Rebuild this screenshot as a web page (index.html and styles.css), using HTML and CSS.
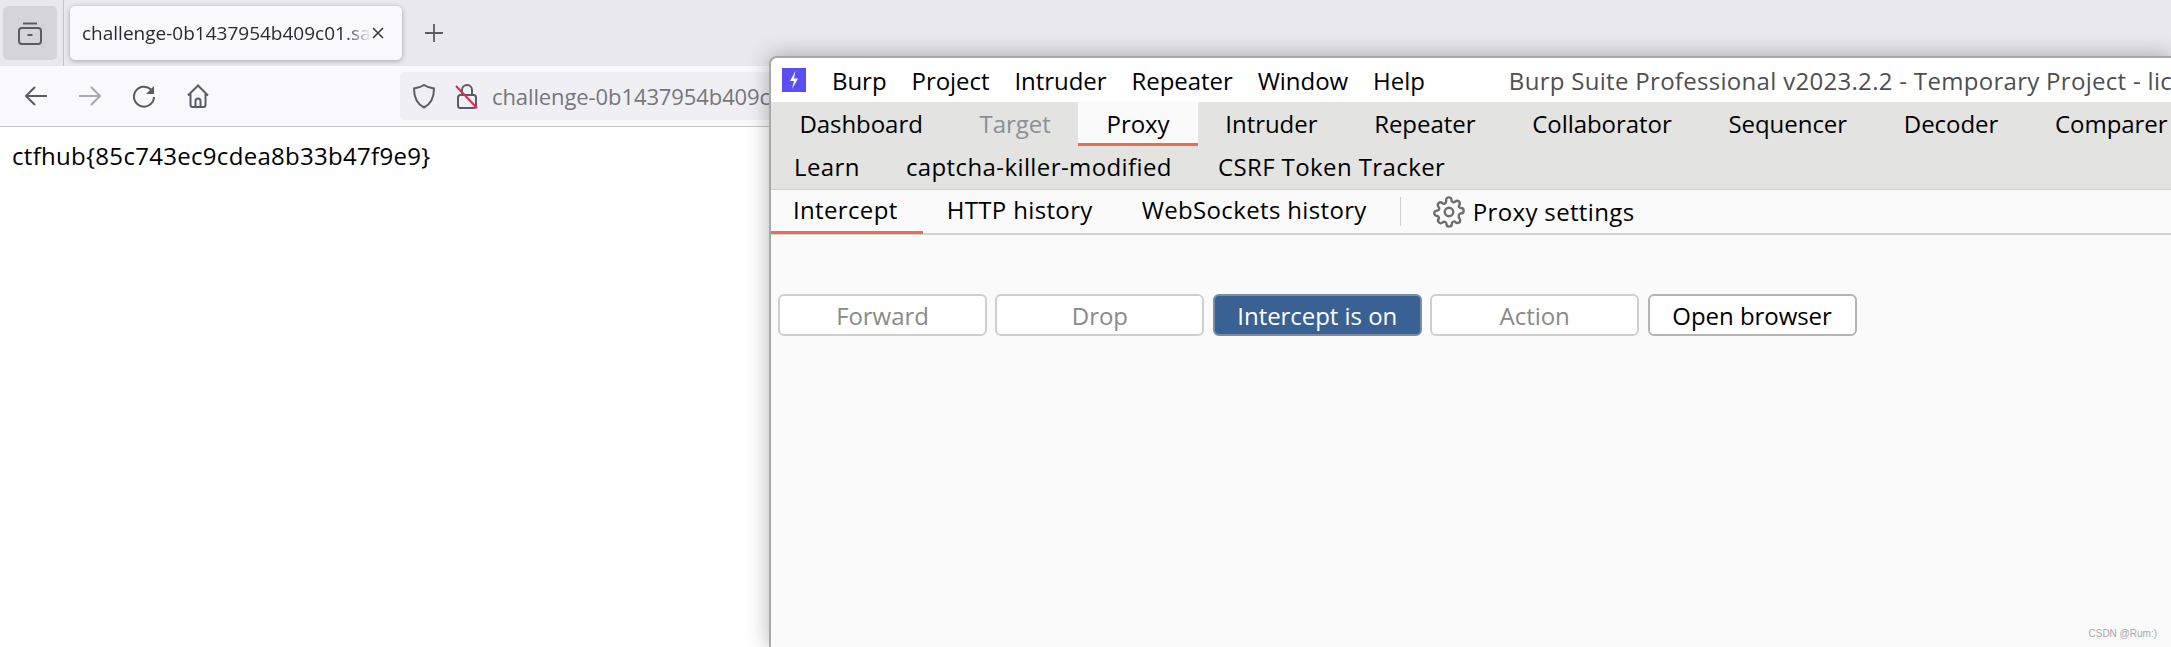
FILE: index.html
```html
<!DOCTYPE html>
<html lang="en">
<head>
<meta charset="utf-8">
<title>Burp over browser</title>
<link rel="stylesheet" href="styles.css">
</head>
<body>
<div class="browser">
  <div class="tabstrip">
    <button class="tabs-btn" aria-label="Tabs">
      <svg width="26" height="24" viewBox="0 0 26 24" fill="none" stroke="#5b5b66" stroke-width="2"><path d="M6 2.5h14"/><rect x="2" y="7" width="22" height="16" rx="3"/><path d="M10.5 14h5"/></svg>
    </button>
    <div class="strip-sep"></div>
    <div class="tab">
      <span class="tab-title">challenge-0b1437954b409c01.sa</span>
      <svg class="tab-close" width="14" height="14" viewBox="0 0 14 14" stroke="#3a3a40" stroke-width="1.6"><path d="M2 2l10 10M12 2L2 12"/></svg>
    </div>
    <svg class="new-tab" width="20" height="20" viewBox="0 0 20 20" stroke="#5b5b66" stroke-width="1.8"><path d="M10 1v18M1 10h18"/></svg>
  </div>
  <div class="toolbar">
    <svg class="tool" width="24" height="22" viewBox="0 0 24 22" fill="none" stroke="#5b5b66" stroke-width="2"><path d="M23 11H2M11 2l-9 9 9 9"/></svg>
    <svg class="tool faded" width="24" height="22" viewBox="0 0 24 22" fill="none" stroke="#a9a9b0" stroke-width="2"><path d="M1 11h21M13 2l9 9-9 9"/></svg>
    <svg class="tool" width="24" height="24" viewBox="0 0 24 24" fill="none" stroke="#5b5b66" stroke-width="2"><path d="M19 5.5A10 10 0 1 0 22 13"/><path d="M22 2v8h-8z" fill="#5b5b66" stroke="none"/></svg>
    <svg class="tool" width="24" height="24" viewBox="0 0 24 24" fill="none" stroke="#5b5b66" stroke-width="2"><path d="M2 11.5L12 1.5l10 10M4.5 10v11a2 2 0 0 0 2 2h11a2 2 0 0 0 2-2V10"/><path d="M9.5 23v-6a2.5 2.5 0 0 1 5 0v6"/></svg>
    <div class="urlbar">
      <svg width="24" height="26" viewBox="0 0 24 26" fill="none" stroke="#5b5b66" stroke-width="2"><path d="M12 2c3 2 6 3 10 3.500C22 15 19 21 12 24.500 5 21 2 15 2 5.500 6 5 9 4 12 2z"/></svg>
      <svg class="lock" width="24" height="26" viewBox="0 0 24 26" fill="none"><path d="M7 12V7a5 5 0 0 1 10 0v5" stroke="#5b5b66" stroke-width="2"/><rect x="3" y="12" width="18" height="13" rx="2.5" stroke="#5b5b66" stroke-width="2"/><path d="M1 3l21 22" stroke="#e22850" stroke-width="2"/></svg>
      <span class="url">challenge-0b1437954b409c0</span>
    </div>
  </div>
  <div class="page">ctfhub{85c743ec9cdea8b33b47f9e9}</div>
</div>

<div class="burp">
  <div class="titlebar">
    <svg class="logo" width="24" height="24" viewBox="0 0 24 24"><rect width="24" height="24" fill="#5a4ff0"/><path d="M13.5 3L8 13h4l-2 8 6-10.500h-4z" fill="#fff"/></svg>
    <nav class="menu">
      <span>Burp</span><span>Project</span><span>Intruder</span><span>Repeater</span><span>Window</span><span>Help</span>
    </nav>
    <span class="wintitle">Burp Suite Professional v2023.2.2 - Temporary Project - lic</span>
  </div>
  <div class="maintabs">
    <div class="tabrow first">
      <span class="mt">Dashboard</span><span class="mt off">Target</span><span class="mt on">Proxy</span><span class="mt">Intruder</span><span class="mt">Repeater</span><span class="mt">Collaborator</span><span class="mt">Sequencer</span><span class="mt">Decoder</span><span class="mt">Comparer</span>
    </div>
    <div class="tabrow second">
      <span class="mt">Learn</span><span class="mt">captcha-killer-modified</span><span class="mt">CSRF Token Tracker</span>
    </div>
  </div>
  <div class="subtabs">
    <span class="st on">Intercept</span><span class="st">HTTP history</span><span class="st">WebSockets history</span>
    <span class="vsep"></span>
    <span class="settings">
      <svg width="32" height="32" viewBox="0 0 24 24" fill="none" stroke="#6f6f6f" stroke-width="1.8" stroke-linejoin="round"><circle cx="12" cy="12" r="3.200"/><path d="M19.400 15a1.650 1.650 0 0 0 .33 1.820l.06.06a2 2 0 1 1-2.830 2.830l-.06-.06a1.650 1.650 0 0 0-2.800 1.170V21a2 2 0 0 1-4 0v-.09a1.650 1.650 0 0 0-2.800-1.120l-.06.06a2 2 0 1 1-2.830-2.830l.06-.06A1.650 1.650 0 0 0 3.090 15H3a2 2 0 0 1 0-4h.09a1.650 1.650 0 0 0 1.120-2.800l-.06-.06a2 2 0 1 1 2.830-2.830l.06.06A1.650 1.650 0 0 0 9.850 4.200V3a2 2 0 0 1 4 0v.09a1.650 1.650 0 0 0 2.800 1.120l.06-.06a2 2 0 1 1 2.830 2.830l-.06.06A1.650 1.650 0 0 0 20.910 9H21a2 2 0 0 1 0 4h-.09a1.650 1.650 0 0 0-1.510 2z"/></svg>
      Proxy settings
    </span>
  </div>
  <div class="actions">
    <button class="btn dim">Forward</button>
    <button class="btn dim">Drop</button>
    <button class="btn primary">Intercept is on</button>
    <button class="btn dim">Action</button>
    <button class="btn">Open browser</button>
  </div>
</div>
<div class="watermark">CSDN @Rum:)</div>
</body>
</html>
```
FILE: styles.css
```css
* { box-sizing: border-box; }
html, body { margin: 0; height: 647px; overflow: hidden; background: #fff; }
body { position: relative; width: 2171px; font-family: "Open Sans", "Noto Sans", sans-serif; color: #000; }

.browser { display: flex; flex-direction: column; height: 647px; }
.tabstrip { height: 66px; background: #e9e9ed; display: flex; align-items: center; padding-left: 3px; }
.tabs-btn { width: 54px; height: 54px; border: 0; border-radius: 5px; background: #d5d5d9; display: flex; align-items: center; justify-content: center; padding: 0; }
.strip-sep { width: 1px; height: 66px; background: #c4c4c8; margin: 0 6px; }
.tab { width: 332px; height: 54px; background: #f9f9fb; border-radius: 5px; box-shadow: 0 1px 5px rgba(0,0,0,.3); display: flex; align-items: center; padding: 0 20px 0 12px; }
.tab-title { flex: 1; white-space: nowrap; font-size: 19px; color: #2a2a30; -webkit-mask-image: linear-gradient(to right, #000 91%, transparent 100%); mask-image: linear-gradient(to right, #000 91%, transparent 100%); }
.tab-close { flex: none; }
.new-tab { margin-left: 22px; }

.toolbar { height: 61px; background: #f9f9fb; border-bottom: 1px solid #c8c8c8; display: flex; align-items: center; padding-left: 24px; }
.tool { margin-right: 30px; flex: none; }
.urlbar { margin-left: 160px; width: 500px; height: 48px; background: #f0f0f4; border-radius: 5px; display: flex; align-items: center; padding-left: 12px; gap: 19px; flex: none; }
.url { font-size: 22px; letter-spacing: -.1px; color: #76767c; white-space: nowrap; margin-left: -6px; }
.page { padding: 12px 12px; font-size: 24px; letter-spacing: .3px; line-height: 34px; }

.burp { position: absolute; left: 769px; top: 56px; width: 1402px; height: 591px; overflow: hidden; background: #fafafa; border: solid #a8a8a8; border-width: 2px 0 0 2px; border-top-left-radius: 8px; box-shadow: 0 0 22px rgba(0,0,0,.3); font-size: 24px; letter-spacing: -.05px; }
.titlebar { height: 44px; background: #fff; display: flex; align-items: center; padding-left: 11px; white-space: nowrap; border-top-left-radius: 6px; }
.logo { flex: none; }
.menu { display: flex; gap: 25px; margin-left: 26px; }
.wintitle { color: #4f4f4f; margin-left: 84px; letter-spacing: .3px; }

.maintabs { background: #e3e3e1; height: 88px; border-bottom: 1px solid #d0d0d0; }
.tabrow { display: flex; height: 44px; white-space: nowrap; }
.mt { display: flex; align-items: center; padding: 0 28.4px 2px; }
.second { letter-spacing: .4px; }
.second .mt { padding: 0 23px 3px; }
.mt.off { color: #8b8f96; }
.mt.on { background: #fafafa; border-bottom: 3px solid #e9704a; padding-top: 1px; padding-bottom: 0; margin-left: -1px; margin-right: -1px; }

.subtabs { height: 45px; display: flex; align-items: center; border-bottom: 2px solid #d2d2d2; white-space: nowrap; letter-spacing: .35px; }
.st { height: 45px; display: flex; align-items: center; padding: 0 25px 1px 23px; border-bottom: 3px solid transparent; margin-left: 1px; }
.st.on { margin-left: 0; padding-left: 22px; border-bottom-color: #e9704a; }
.vsep { width: 1px; height: 29px; background: #cfcfcf; margin-left: 8px; }
.settings { display: flex; align-items: center; gap: 8px; margin-left: 32px; }

.actions { display: flex; gap: 8.4px; padding: 59px 0 0 7px; }
.btn { width: 209px; height: 42px; flex: none; border: 2px solid #cfcfcf; border-radius: 6px; background: #fff; font: inherit; letter-spacing: inherit; color: #000; padding: 0; }
.btn.dim { color: #8a8a8a; }
.btn.primary { background: #3a6194; border-color: #7b8ca5; color: #fff; }
.btn:last-child { border-color: #b4b4b4; }

.watermark { position: absolute; right: 14px; bottom: 8px; font: 10px "Liberation Sans", Arial, sans-serif; color: #a8a8a8; }
```
